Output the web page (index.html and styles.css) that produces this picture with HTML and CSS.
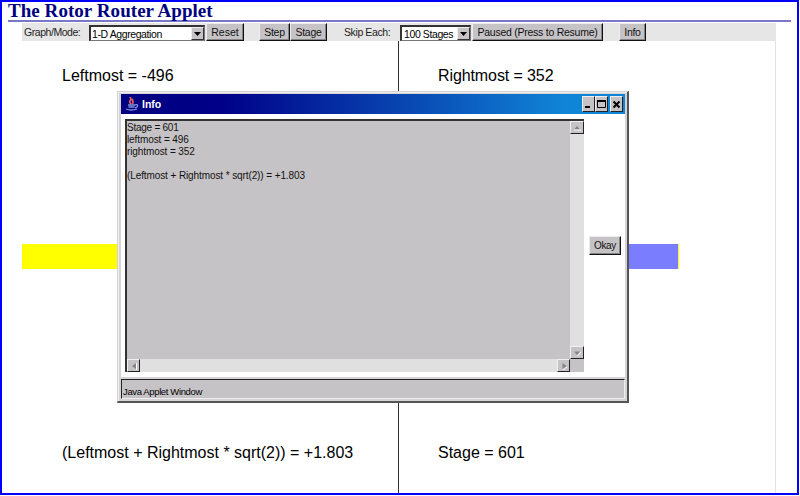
FILE: index.html
```
<!DOCTYPE html>
<html lang="en">
<head>
<meta charset="utf-8">
<title>The Rotor Router Applet</title>
<link rel="stylesheet" href="styles.css">
</head>
<body>
<main class="page">
  <h1 class="heading">The Rotor Router Applet</h1>
  <section class="applet">
    <div class="toolbar">
      <span class="label mode-label">Graph/Mode:</span>
      <div class="select mode"><span>1-D Aggregation</span><i class="drop"><svg width="7" height="4"><path d="M0 0h7L3.5 4z"/></svg></i></div>
      <button class="btn reset">Reset</button>
      <button class="btn step">Step</button>
      <button class="btn stage">Stage</button>
      <span class="label skip-label">Skip Each:</span>
      <div class="select skip"><span>100 Stages</span><i class="drop"><svg width="7" height="4"><path d="M0 0h7L3.5 4z"/></svg></i></div>
      <button class="btn pause">Paused (Press to Resume)</button>
      <button class="btn info">Info</button>
    </div>
    <div class="graph">
      <div class="half left">
        <p>Leftmost = -496</p>
        <div class="bar yellow"></div>
        <p>(Leftmost + Rightmost * sqrt(2)) = +1.803</p>
      </div>
      <div class="half right">
        <p class="rightmost">Rightmost = 352</p>
        <div class="bar blue"></div>
        <p>Stage = 601</p>
      </div>
    </div>
  </section>
</main>
<div class="dialog" role="dialog" aria-label="Info">
  <header class="titlebar">
    <svg class="java" width="14" height="14" viewBox="0 0 14 14" fill="none">
      <path d="M6 7C2 4 8 4 5 0M7 7C10 4 6 4 8 2" stroke="#e9605d" stroke-width="1.7"/>
      <path d="M3 8h7M3.5 10h6M1 12q5 2 11 0M10 8q4-1 2 2l-2 1" stroke="#8294d8" stroke-width="1.3"/>
    </svg>
    <span class="title">Info</span>
    <div class="controls">
      <b class="ctl"><svg width="11" height="12"><path d="M2 9h5" stroke="#000" stroke-width="2"/></svg></b>
      <b class="ctl"><svg width="11" height="12"><path d="M1 3h9" stroke="#000" stroke-width="2"/><path d="M1.500 3v6.500h8V3" fill="none" stroke="#000"/></svg></b>
      <b class="ctl close"><svg width="11" height="12"><path d="M2.500 3.500l6 6M8.500 3.500l-6 6" stroke="#000" stroke-width="2"/></svg></b>
    </div>
  </header>
  <div class="content">
    <div class="textarea">
      <div class="text"><div class="tight">Stage = 601</div><div>leftmost = 496</div><div>rightmost = 352</div><div>&nbsp;</div><div>(Leftmost + Rightmost * sqrt(2)) = +1.803</div></div>
      <div class="scroll vertical">
        <i class="arrow"><svg width="8" height="8"><path d="M1 5.500h6L4 2z" fill="#858585"/><path d="M1 6h7" stroke="#fff"/></svg></i>
        <i class="arrow"><svg width="8" height="8"><path d="M4.500 7L8 3" stroke="#fff"/><path d="M1 2.500h6L4 6z" fill="#858585"/></svg></i>
      </div>
      <div class="scroll horizontal">
        <i class="arrow"><svg width="8" height="8"><path d="M6.500 1v7" stroke="#fff"/><path d="M6 1v6L2 4z" fill="#858585"/></svg></i>
        <i class="arrow"><svg width="8" height="8"><path d="M3 8l4-3" stroke="#fff"/><path d="M2.500 1v6l4-3z" fill="#858585"/></svg></i>
      </div>
      <div class="corner"></div>
    </div>
    <button class="btn okay">Okay</button>
  </div>
  <footer class="status"><span>Java Applet Window</span></footer>
</div>
</body>
</html>
```
FILE: styles.css
```
* { box-sizing: border-box; }
body {
  margin: 0;
  background: #fff;
  color: #000;
  font-family: "Liberation Sans", Arial, sans-serif;
}
.page {
  width: 799px;
  height: 495px;
  border: 2px solid #00f;
  padding: 0 6px;
  overflow: hidden;
}
.heading {
  height: 20px;
  margin: 0;
  border-bottom: 2px solid #7878c6;
  color: #000080;
  font: bold 19px/18px "Liberation Serif", serif;
  letter-spacing: 0.05px;
  white-space: nowrap;
}
.applet {
  width: 754px;
  margin: 1px 0 0 14px;
}
.toolbar {
  display: flex;
  height: 18px;
  background: #e6e6e6;
  font-size: 10.5px;
  white-space: nowrap;
}
.label { line-height: 19px; color: #222; }
.mode-label { width: 67px; padding-left: 2px; letter-spacing: -0.45px; }
.skip-label { width: 73px; padding-left: 17px; letter-spacing: -0.4px; }
.select {
  display: flex;
  justify-content: space-between;
  height: 16px;
  margin-top: 2px;
  border: 1px solid #777;
  border-top: 2px solid #333;
  border-left: 2px solid #333;
  background: #fff;
  line-height: 14px;
  letter-spacing: -0.4px;
}
.select span { padding-left: 1px; }
.mode { width: 116px; }
.skip { width: 71px; }
.skip span { padding-left: 2px; }
.drop {
  display: flex;
  align-items: center;
  justify-content: center;
  width: 13px;
  border: 1px solid #333;
  border-top-color: #eee;
  border-left-color: #eee;
  background: #c6c3c6;
}
.btn {
  height: 18px;
  padding: 0;
  border: 1px solid #ececec;
  border-right: 1px solid #111;
  border-bottom: 1px solid #111;
  background: #c6c3c6;
  box-shadow: inset -1px -1px #858585;
  color: #111;
  font: 10.5px/14px "Liberation Sans", Arial, sans-serif;
  letter-spacing: -0.3px;
  white-space: nowrap;
}
.reset { width: 38px; margin-left: 1px; letter-spacing: 0; }
.step { width: 31px; margin-left: 15px; }
.stage { width: 37px; }
.pause { width: 131px; margin-left: 1px; letter-spacing: -0.25px; }
.info { width: 27px; margin-left: 16px; }

.graph {
  display: flex;
  height: 452px;
  border-right: 1px solid #e2e2e2;
}
.half {
  display: grid;
  grid-template-rows: 203px 25px 224px;
}
.left { width: 376px; }
.right { flex: 1; border-left: 1px solid #333; }
.half p {
  margin: 0;
  padding: 25px 0 0 40px;
  font-size: 16px;
  line-height: 20px;
  white-space: nowrap;
}
.half p:last-child { padding-top: 174px; }
.right p { padding-left: 39px; }
.half .rightmost { letter-spacing: -0.1px; }
.bar.yellow { background: #ff0; }
.bar.blue { width: 280px; background: #7b7dff; border-right: 1px solid #ff0; }

.dialog {
  position: absolute;
  left: 117px;
  top: 91px;
  display: flex;
  flex-direction: column;
  width: 512px;
  height: 312px;
  padding: 1px;
  border: 1px solid #d6d3d6;
  border-right: 2px solid #555;
  border-bottom: 2px solid #555;
  box-shadow: inset 1px 1px #eee;
  background: #d6d3d6;
}
.titlebar {
  display: flex;
  align-items: center;
  height: 20px;
  margin: 1px 1px 0 2px;
  padding: 0 2px 0 4px;
  background: linear-gradient(90deg, #000080, #000088 20%, #1084d6 88%);
  color: #fff;
  font-size: 10.5px;
  font-weight: bold;
}
.title { margin-left: 3px; }
.controls { display: flex; margin-left: auto; }
.ctl {
  display: flex;
  align-items: center;
  justify-content: center;
  width: 13px;
  height: 16px;
  border: 1px solid #eee;
  border-right-color: #222;
  border-bottom-color: #222;
  background: #c6c3c6;
}
.ctl svg { flex: none; }
.close { margin-left: 2px; }
.content {
  display: flex;
  align-items: center;
  height: 263px;
  margin: 0 1px 0 2px;
  padding: 0 4px;
  background: #fff;
}
.textarea {
  display: grid;
  grid-template: 238px 13px / 443px 14px;
  width: 459px;
  height: 253px;
  border-top: 2px solid #333;
  border-left: 2px solid #333;
}
.text {
  background: #c6c3c6;
  color: #111;
  font-size: 10px;
  line-height: 12px;
  letter-spacing: -0.1px;
  padding-top: 1px;
  white-space: nowrap;
}
.tight { letter-spacing: -0.25px; }
.scroll { display: flex; justify-content: space-between; background: #e0e0e0; }
.vertical { flex-direction: column; }
.arrow {
  display: flex;
  align-items: center;
  justify-content: center;
  width: 13px;
  height: 13px;
  border: 1px solid #f0f0f0;
  border-right-color: #222;
  border-bottom-color: #222;
  background: #c6c3c6;
}
.vertical .arrow { width: 14px; }
.corner { background: #c6c3c6; }
.okay { width: 33px; height: 19px; margin-left: 5px; font-size: 10px; }
.status {
  height: 20px;
  margin: 2px 1px 0 2px;
  border: 1px solid #eee;
  border-top-color: #222;
  border-left-color: #222;
  background: #c6c3c6;
  font-size: 9.5px;
  line-height: 23px;
  letter-spacing: -0.37px;
  padding-left: 1px;
  white-space: nowrap;
}
```
